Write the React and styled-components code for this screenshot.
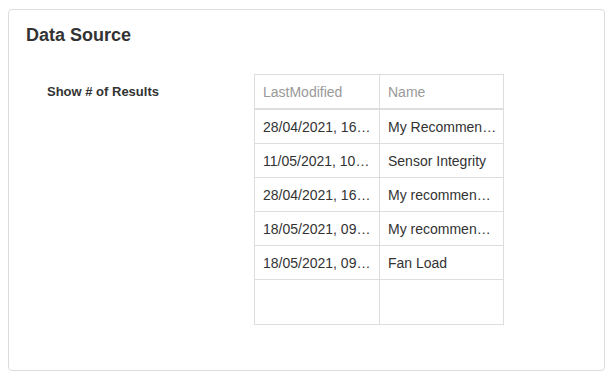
import React from 'react'
import styled, { createGlobalStyle } from 'styled-components'

const GlobalStyle = createGlobalStyle`
    html, body {
        margin: 0;
        padding: 0;
        background: #fff;
        font-family: "Liberation Sans", Arial, sans-serif;
        color: #333;
    }
`

const Page = styled.div`
    padding: 9px 0 0 8px;
`

const Card = styled.section`
    box-sizing: border-box;
    width: 597px;
    height: 362px;
    border: 1px solid #dcdcdc;
    border-radius: 4px;
    padding: 15px 17px;
    background: #fff;
`

const Title = styled.h2`
    margin: 0;
    font-size: 18px;
    font-weight: 700;
    line-height: 21px;
    color: #333;
`

const FormRow = styled.div`
    display: flex;
    align-items: flex-start;
    margin-top: 28px;
`

const Label = styled.label`
    box-sizing: border-box;
    width: 228px;
    padding: 10px 0 0 21px;
    font-size: 13px;
    font-weight: 700;
    line-height: 15px;
    color: #333;
`

const ResultsTable = styled.table`
    width: 249px;
    table-layout: fixed;
    border-collapse: collapse;
    font-size: 14px;
    border: 1px solid #ddd;
`

const Col = styled.col`
    width: ${p => p.$width}px;
`

const HeadCell = styled.th`
    height: 33px;
    padding: 0 8px;
    text-align: left;
    font-weight: 400;
    color: #999;
    border: 1px solid #ddd;
    border-bottom: 2px solid #ddd;
`

const Cell = styled.td`
    height: ${p => (p.$empty ? 44 : 33)}px;
    padding: 0 ${p => (p.$last ? 6 : 8)}px 0 8px;
    color: #333;
    border: 1px solid #ddd;
    white-space: nowrap;
    overflow: hidden;
    text-overflow: ellipsis;
`

const rows = [
    { modified: '28/04/2021, 16:42:17', name: 'My Recommendations' },
    { modified: '11/05/2021, 10:05:33', name: 'Sensor Integrity' },
    { modified: '28/04/2021, 16:50:02', name: 'My recommendations' },
    { modified: '18/05/2021, 09:12:48', name: 'My recommendations 2' },
    { modified: '18/05/2021, 09:30:11', name: 'Fan Load' },
]

const App = () => {
    return (
        <Page>
            <GlobalStyle />
            <Card>
                <Title>Data Source</Title>
                <FormRow>
                    <Label>Show # of Results</Label>
                    <ResultsTable>
                        <colgroup>
                            <Col $width={125} />
                            <Col $width={124} />
                        </colgroup>
                        <thead>
                            <tr>
                                <HeadCell>LastModified</HeadCell>
                                <HeadCell>Name</HeadCell>
                            </tr>
                        </thead>
                        <tbody>
                            {rows.map(row => (
                                <tr key={row.modified + row.name}>
                                    <Cell>{row.modified}</Cell>
                                    <Cell $last>{row.name}</Cell>
                                </tr>
                            ))}
                            <tr>
                                <Cell $empty />
                                <Cell $empty $last />
                            </tr>
                        </tbody>
                    </ResultsTable>
                </FormRow>
            </Card>
        </Page>
    )
}

export default App
